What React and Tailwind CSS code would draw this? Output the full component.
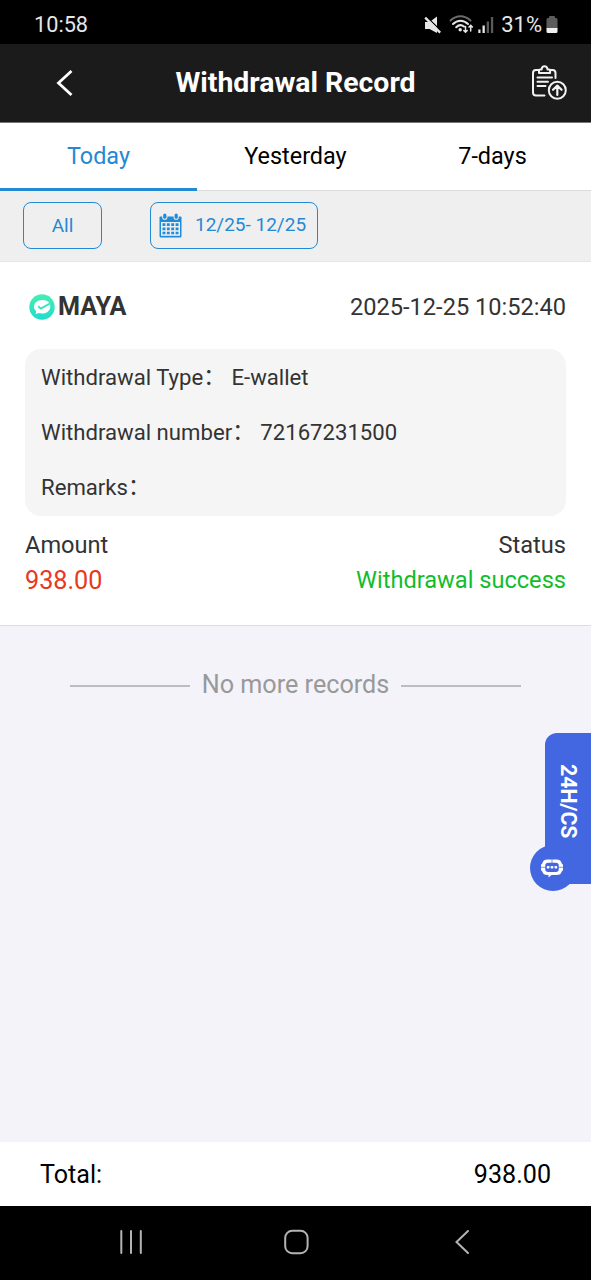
import React from "react";

function MuteIcon() {
  return (
    <svg width="18" height="18" viewBox="0 0 18 18" fill="none">
      <path d="M1 6h4.500L13 .5v16.500L5.500 13H1z" fill="#e6e6e6" />
      <path d="M2.600.6l15 15" stroke="#000" strokeWidth="1.300" />
      <path d="M1.200 1.600l15 15" stroke="#e6e6e6" strokeWidth="2.300" />
    </svg>
  );
}

function WifiIcon() {
  return (
    <svg width="26" height="19" viewBox="0 0 26 19" fill="none" strokeLinecap="round">
      <path d="M1.500 5.500C7.500-.2 15.500-.2 21.500 5.500" stroke="#6b6b6b" strokeWidth="2" />
      <path d="M4 9c4.500-4.300 10.500-4.300 15 0" stroke="#e6e6e6" strokeWidth="2" />
      <path d="M7.200 12.200c2.400-2.300 5.600-2.400 7.800-.6" stroke="#e6e6e6" strokeWidth="2" />
      <circle cx="11.200" cy="14.800" r="1.700" fill="#e6e6e6" />
      <path d="M16.500 11.500v5.500M14.800 15.500l1.700 1.700 1.700-1.700M21.700 16v-5.500M20 12l1.700-1.700L23.400 12" stroke="#e6e6e6" strokeWidth="1.500" />
    </svg>
  );
}

function SignalIcon() {
  return (
    <svg width="16" height="18" viewBox="0 0 16 18">
      <rect x="0.300" y="13.500" width="2.200" height="3.500" fill="#e6e6e6" />
      <rect x="4.500" y="9.500" width="2.300" height="7.500" fill="#e6e6e6" />
      <rect x="8.700" y="5.500" width="2.300" height="11.500" fill="#5a5a5a" />
      <rect x="12.900" y="1" width="2.300" height="16" fill="#5a5a5a" />
    </svg>
  );
}

function BatteryIcon() {
  return (
    <svg width="12" height="18" viewBox="0 0 12 18">
      <path d="M3 2V1q0-1 1-1h4q1 0 1 1v1h1q1.500 0 1.500 1.500V13H.5V3.500Q.5 2 2 2z" fill="#5c5c5c" />
      <path d="M.5 12h11v3.500q0 1.500-1.500 1.500H2Q.5 17 .5 15.500z" fill="#f0f0f0" />
    </svg>
  );
}

function ClipboardIcon() {
  return (
    <svg width="36" height="36" viewBox="0 0 36 36" fill="none" stroke="#f2f2f2" strokeWidth="2" strokeLinecap="round" strokeLinejoin="round">
      <path d="M13.500 30.500H5q-3 0-3-3V8q0-3 3-3h2.800M19.300 5H21.500q3 0 3 3v5" />
      <path d="M8 8V5.500q0-1 1-1h1.600C11 .2 16 .2 16.500 4.500h1.600q1 0 1 1V8z" />
      <path d="M6.500 12.500h14.500M6.500 16.800h10.500M6.500 21h8" />
      <circle cx="26.300" cy="25.300" r="8.500" />
      <path d="M26.300 30v-9M22 24.800l4.300-4.200 4.300 4.200" strokeWidth="2.200" />
    </svg>
  );
}

function CalendarIcon() {
  return (
    <svg width="23" height="25" viewBox="0 0 23 25">
      <path d="M1.500 3.500h20q1 0 1 1V23q0 1.500-1.500 1.500H2Q.5 24.500.5 23V4.500q0-1 1-1z" fill="#1f8bdc" />
      <path d="M2 9h19v13.800H2z" fill="#efefef" />
      <rect x="3.200" y="0" width="5.200" height="6.800" rx="2.600" fill="#efefef" />
      <rect x="14.600" y="0" width="5.200" height="6.800" rx="2.600" fill="#efefef" />
      <rect x="4.200" y="0.500" width="3.200" height="5.300" rx="1.600" fill="#1f8bdc" />
      <rect x="15.600" y="0.500" width="3.200" height="5.300" rx="1.600" fill="#1f8bdc" />
      <path d="M3.500 11.600h16M3.500 15.800h16M3.500 20h16" stroke="#1f8bdc" strokeWidth="2.700" strokeDasharray="2.900 1.470" />
    </svg>
  );
}

function MayaLogo() {
  return (
    <svg width="26" height="26" viewBox="0 0 26 26" fill="none">
      <defs>
        <linearGradient id="maya" x1="0" y1="0" x2="0" y2="1">
          <stop offset="0" stopColor="#45efb0" />
          <stop offset="1" stopColor="#20dccb" />
        </linearGradient>
      </defs>
      <circle cx="13" cy="13" r="12.700" fill="url(#maya)" />
      <path d="M13.500 6c5 0 7.800 2.800 7.800 6.500 0 4.300-3.500 7-8 7-1.500 0-2.500-.3-3.300-.5L6.700 20l.4-3C5.600 15.800 5 14.500 5 12.700 5 8.800 8.500 6 13.500 6z" fill="#fff" />
      <path d="M9.200 12.300l2.600 2.200L20.800 9.500" stroke="#35e5bb" strokeWidth="1.900" />
    </svg>
  );
}

function ChatIcon() {
  return (
    <svg width="24" height="22" viewBox="0 0 24 22" fill="none">
      <path d="M7.500 1.500h9q4.500 0 5.200 4Q23 6 23 7.500v4q0 1.500-1.300 2-.7 3.500-5.200 3.500h-5L8.500 19.500V17h-1q-4.500 0-5.200-3.500Q1 13 1 11.500v-4Q1 6 2.300 5.500q.7-4 5.200-4z" fill="#fff" />
      <rect x="5.200" y="4.700" width="13.600" height="9.200" rx="3" fill="#4267e0" />
      <path d="M12 1v4M0 9.300h5.500M18.500 9.300H24" stroke="#4267e0" strokeWidth="0.700" />
      <rect x="6.800" y="7.900" width="2.700" height="2.700" rx="0.800" fill="#fff" />
      <rect x="10.650" y="7.900" width="2.700" height="2.700" rx="0.800" fill="#fff" />
      <rect x="14.500" y="7.900" width="2.700" height="2.700" rx="0.800" fill="#fff" />
    </svg>
  );
}

function DetailRow({ label, value }) {
  return (
    <div className="flex h-[55px] items-center whitespace-pre" lang="zh-CN">
      <span>{label}</span>
      <span className="pb-px">：</span>
      <span className="ml-[6px]">{value}</span>
    </div>
  );
}

export default function App() {
  return (
    <div className="relative flex h-[1280px] w-[591px] flex-col overflow-hidden bg-[#f3f3f9] font-[Roboto,'Noto_Sans_CJK_SC',sans-serif] text-[#333]">
      <div className="flex h-[44px] shrink-0 items-center bg-black pt-[5px] pr-[33px] pl-[34px] text-[#e6e6e6]">
        <span className="text-[21.700px] leading-[28px]">10:58</span>
        <div className="ml-auto flex items-center">
          <MuteIcon />
          <span className="ml-[7px]"><WifiIcon /></span>
          <span className="ml-[3px]"><SignalIcon /></span>
          <span className="ml-[7px] text-[22px] leading-[28px]">31%</span>
          <span className="ml-[4px]"><BatteryIcon /></span>
        </div>
      </div>

      <header className="grid h-[78px] shrink-0 grid-cols-[130px_1fr_130px] items-center bg-[#1b1b1b] text-white">
        <svg className="ml-[55px]" width="20" height="28" viewBox="0 0 20 28" fill="none" stroke="#fff" strokeWidth="2.800">
          <path d="M16.500 2L3.500 14l13 12" />
        </svg>
        <h1 className="pt-px text-center text-[28.400px] font-bold whitespace-nowrap">Withdrawal Record</h1>
        <span className="ml-[70px]"><ClipboardIcon /></span>
      </header>

      <nav className="grid h-[69px] shrink-0 grid-cols-3 border-t border-b border-t-[#777] border-b-[#dcdcdc] bg-white text-center text-[23.400px] leading-[67px] text-black">
        <div className="h-[68px] border-b-[3px] border-[#2489d4] text-[#2489d4]">Today</div>
        <div>Yesterday</div>
        <div>7-days</div>
      </nav>

      <div className="flex h-[71px] shrink-0 items-center border-b border-[#e6e6e6] bg-[#efefef] pb-[2px] pl-[23px] text-[19px] text-[#2489d4]">
        <div className="flex h-[47px] w-[79px] items-center justify-center rounded-[8px] border border-[#2489d4] pt-[2px]">All</div>
        <div className="ml-[48px] flex h-[47px] w-[168px] items-center rounded-[8px] border border-[#2489d4] pl-[8px]">
          <CalendarIcon />
          <span className="ml-[13px] whitespace-nowrap">12/25- 12/25</span>
        </div>
      </div>

      <section className="flex h-[364px] shrink-0 flex-col border-b border-[#dedee2] bg-white px-[25px] pt-[28px]">
        <div className="flex h-[34px] items-center">
          <span className="ml-[4px]"><MayaLogo /></span>
          <span className="ml-[3px] text-[25.200px] font-bold">MAYA</span>
          <span className="ml-auto pt-px text-[23.600px]">2025-12-25 10:52:40</span>
        </div>
        <div className="mt-[25px] h-[167px] rounded-[16px] bg-[#f5f5f5] pt-px pl-[16px] text-[22.150px]">
          <DetailRow label="Withdrawal Type" value="E-wallet" />
          <DetailRow label="Withdrawal number" value="72167231500" />
          <DetailRow label="Remarks" value="" />
        </div>
        <div className="mt-[12px] flex h-[35px] items-center justify-between pt-px text-[23.600px]">
          <span>Amount</span>
          <span>Status</span>
        </div>
        <div className="flex h-[35px] items-center justify-between">
          <span className="text-[25.200px] text-[#e83820]">938.00</span>
          <span className="text-[23.600px] text-[#13bc2c]">Withdrawal success</span>
        </div>
      </section>

      <main className="flex-1 pt-[42px]">
        <div className="flex h-[34px] items-center justify-center gap-[12px] text-[25.200px] text-[#999]">
          <span className="mt-[2px] h-[2px] w-[120px] bg-[#bcbcc2]" />
          <span className="whitespace-nowrap">No more records</span>
          <span className="mt-[2px] h-[2px] w-[120px] bg-[#bcbcc2]" />
        </div>
      </main>

      <footer className="flex h-[64px] shrink-0 items-center justify-between bg-white px-[40px] pt-px text-[25.100px] text-black">
        <span>Total:</span>
        <span>938.00</span>
      </footer>

      <div className="flex h-[74px] shrink-0 items-center justify-center bg-black pr-px pb-[2px]">
        <svg width="351" height="28" viewBox="0 0 351 28" fill="none" stroke="#b4b4b4" strokeWidth="2" strokeLinecap="round">
          <path d="M1.300 3v22M11 3v22M20.800 3v22" />
          <rect x="165.200" y="2.800" width="22.400" height="22.400" rx="7" />
          <path d="M348 3l-11.500 11L348 25" />
        </svg>
      </div>

      <div className="absolute top-[733px] left-[530px] h-[158px] w-[61px]">
        <div className="absolute top-0 right-0 flex h-[151px] w-[46px] items-start justify-center rounded-l-[12px] bg-[#4267e0] pt-[31px] text-[21.300px] font-bold text-white">
          <span className="leading-[46px] [writing-mode:vertical-rl]">24H/CS</span>
        </div>
        <div className="absolute bottom-0 left-0 flex h-[46px] w-[46px] items-center justify-center rounded-full bg-[#4267e0] pt-[2px] pr-[2px]">
          <ChatIcon />
        </div>
      </div>
    </div>
  );
}
